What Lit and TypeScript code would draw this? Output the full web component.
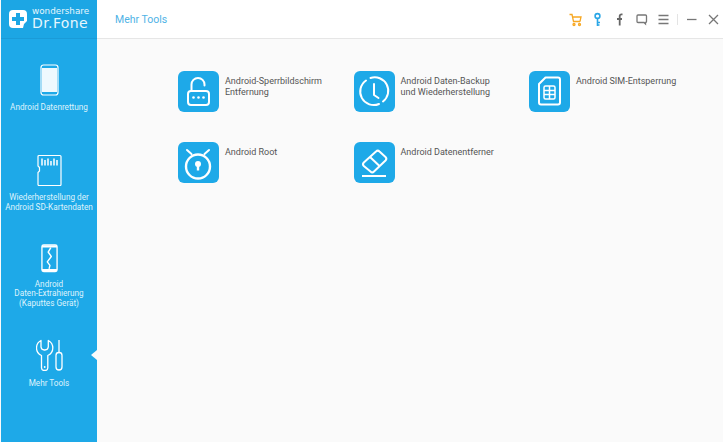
import { LitElement, html, css, svg } from "lit";
import { customElement } from "lit/decorators.js";

const tiles = [
  { label: ["Android-Sperrbildschirm", "Entfernung"], icon: svg`<g fill="none" stroke="#fff" stroke-width="2" stroke-linecap="round"><path d="M13.500 20v-6.500a6.500 6.500 0 0 1 13 0v1"/><rect x="10" y="20" width="21" height="14" rx="3"/></g><g fill="#fff"><circle cx="15.500" cy="26.500" r="1.300"/><circle cx="20.500" cy="26.500" r="1.300"/><circle cx="25.500" cy="26.500" r="1.300"/></g>` },
  { label: ["Android Daten-Backup", "und Wiederherstellung"], icon: svg`<g fill="none" stroke="#fff" stroke-width="2" stroke-linecap="round" stroke-linejoin="round"><path d="M16.500 7A13.500 13.500 0 0 1 29 30.500"/><path d="M25 33A13.500 13.500 0 0 1 12 9.500"/><path d="M20 13v11l4.500 3"/></g>` },
  { label: ["Android SIM-Entsperrung"], icon: svg`<g fill="none" stroke="#fff" stroke-width="2" stroke-linejoin="round"><path d="M16.500 6.500H29a2 2 0 0 1 2 2v23a2 2 0 0 1-2 2H12a2 2 0 0 1-2-2V13z"/><rect x="15" y="15" width="11" height="13" rx="1.500" stroke-width="1.500"/><path d="M20.500 15v13M15 19.500h11M15 23.500h11" stroke-width="1.500"/></g>` },
  { label: ["Android Root"], icon: svg`<g fill="none" stroke="#fff" stroke-linecap="round"><circle cx="20" cy="24.500" r="12" stroke-width="2.400"/><path d="M9 8l4.500 4M31 8l-4.500 4" stroke-width="2"/></g><circle cx="20" cy="22" r="3" fill="#fff"/><rect x="18.800" y="23" width="2.400" height="5.500" fill="#fff"/>` },
  { label: ["Android Datenentferner"], icon: svg`<g fill="none" stroke="#fff" stroke-width="2" stroke-linejoin="round"><path d="M9.800 20.500L22 9.500a2.500 2.500 0 0 1 3.500 0l6 5.500a2.500 2.500 0 0 1 0 3.500L20 29.500a2.500 2.500 0 0 1-3.500 0l-6.700-5.500a2.500 2.500 0 0 1 0-3.500z"/><path d="M16 15l9.500 9"/></g><rect x="8" y="33" width="24" height="2" fill="#fff"/>` },
];

const nav = [
  {
    label: ["Android Datenrettung"],
    icon: svg`<rect x="1" y="1" width="17" height="30" rx="2.500" fill="none" stroke="#fff" stroke-width="1.200"/><rect x="2" y="4" width="15" height="24" fill="#fff" fill-opacity=".93"/>`,
    w: 19,
  },
  {
    label: ["Wiederherstellung der", "Android SD-Kartendaten"],
    icon: svg`<path d="M3 1.500h21a1 1 0 0 1 1 1v28a1 1 0 0 1-1 1H3a1 1 0 0 1-1-1V18.500l1.500-1.500v-3.500L2 12V2.500a1 1 0 0 1 1-1z" fill="none" stroke="#fff" stroke-width="1.200"/><path d="M6 4.500v7M9 6v5.500M12 4.500v7M15 7v4.500M18 4.500v7M21 6v5.500" stroke="#fff" stroke-width="1.500" fill="none"/>`,
    w: 27,
  },
  {
    label: ["Android", "Daten-Extrahierung", "(Kaputtes Gerät)"],
    icon: svg`<rect x="1" y="1" width="17" height="30" rx="2" fill="none" stroke="#fff" stroke-width="1.500"/><path d="M1 1.500h17V4H1zM1 28h17v2.500H1z" fill="#fff"/><path d="M11 4L8 9l3.500 5-4.500 6 3 4-1 4" fill="none" stroke="#fff" stroke-width="1.600" stroke-linejoin="round"/>`,
    w: 19,
  },
  {
    label: ["Mehr Tools"],
    icon: svg`<g fill="none" stroke="#fff" stroke-width="1.300" stroke-linejoin="round"><path d="M5 1.500C1.800 3.200 .5 6 .5 9c0 3.500 2.200 6.200 5 7.500V29a2.800 2.800 0 0 0 2.800 2.500h.7A2.800 2.800 0 0 0 11.800 29V16.500c2.800-1.300 5-4 5-7.500 0-3-1.300-5.800-4.500-7.500v6.500A3.500 3.500 0 0 1 8.700 11 3.500 3.500 0 0 1 5 8z"/><path d="M23 1v12.500"/><path d="M23 13.500c-2 0-3 1.200-3 2.800V28a3 3 0 0 0 6 0V16.300c0-1.600-1-2.800-3-2.800z"/></g><circle cx="8.700" cy="28" r=".9" fill="#fff"/>`,
    w: 27,
  },
];

@customElement("app-root")
export class AppRoot extends LitElement {
  static styles = css`
    :host {
      display: block;
      width: 723px;
      height: 442px;
      overflow: hidden;
      font-family: Roboto, "Open Sans", sans-serif;
      background: #fafafa;
    }
    .app {
      display: flex;
      height: 442px;
    }
    .side {
      width: 96px;
      margin-left: 1px;
      flex: none;
      background: #1ea9e8;
      color: #dff3fc;
      display: flex;
      flex-direction: column;
      position: relative;
    }
    .logo {
      height: 38px;
      display: flex;
      align-items: center;
      padding-left: 8px;
      gap: 5px;
      box-sizing: border-box;
      background: #1ca6e4;
      box-shadow: 0 1px 0 #1a9bd8;
    }
    .logo .words {
      display: flex;
      flex-direction: column;
      color: #e6f6fd;
      font-family: "DejaVu Sans", sans-serif;
      padding-bottom: 3px;
    }
    .ws {
      font-size: 8.800px;
      line-height: 10px;
    }
    .df {
      font-size: 14px;
      line-height: 14px;
      letter-spacing: 0.400px;
    }
    .nav {
      height: 90px;
      padding-top: 26px;
      box-sizing: border-box;
      display: flex;
      flex-direction: column;
      align-items: center;
      text-align: center;
      font-size: 8.200px;
      line-height: 9.500px;
      gap: 7px;
    }
    .nav:last-child {
      margin-top: 5px;
      gap: 8px;
    }
    .nav svg {
      display: block;
      height: 32px;
    }
    .caret {
      position: absolute;
      right: 0;
      top: 350px;
      width: 0;
      height: 0;
      border: 5px solid transparent;
      border-right: 6px solid #fafafa;
      border-left: 0;
    }
    .main {
      flex: 1;
      display: flex;
      flex-direction: column;
      min-width: 0;
    }
    .top {
      height: 39px;
      box-sizing: border-box;
      background: #fff;
      border-bottom: 1px solid #e6e6e6;
      display: flex;
      align-items: center;
      padding-left: 18px;
      padding-right: 2px;
    }
    .title {
      color: #4fb3e6;
      font-size: 10.500px;
      flex: 1;
    }
    .tools {
      display: flex;
      align-items: center;
    }
    .tools svg {
      display: block;
      width: 15px;
      height: 15px;
    }
    .t {
      margin-left: 7px;
    }
    .sep {
      width: 1px;
      height: 11px;
      background: #e4e4e4;
      margin: 0 6px 0 6px;
    }
    .grid {
      display: grid;
      grid-template-columns: repeat(3, 175.500px);
      grid-auto-rows: 71px;
      padding: 32px 0 0 81px;
    }
    .tile {
      display: flex;
      gap: 6px;
      color: #555;
      font-size: 9px;
      line-height: 11px;
    }
    .ic {
      width: 41px;
      height: 41px;
      border-radius: 6px;
      background: #1ea9e8;
      flex: none;
    }
    .ic svg {
      display: block;
      width: 41px;
      height: 41px;
    }
    .lbl {
      padding-top: 5px;
      white-space: nowrap;
    }
  `;

  render() {
    return html`<div class="app">
      <aside class="side">
        <div class="caret"></div>
        <div class="logo">
          <svg width="18" height="18" viewBox="0 0 18 18">
            <path d="M4 0h10a4 4 0 0 1 4 4v7l-3 3-1 4H4a4 4 0 0 1-4-4V4a4 4 0 0 1 4-4z" fill="#fff" />
            <path d="M7 3h4v4h4v4h-4v4H7v-4H3V7h4z" fill="#1ca6e4" />
          </svg>
          <div class="words"><span class="ws">wondershare</span><span class="df">Dr.Fone</span></div>
        </div>
        ${nav.map(
          (n) => html`<div class="nav">
            <svg viewBox="0 0 ${n.w} 32" width="${n.w}">${n.icon}</svg>
            <div>${n.label.map((l) => html`<div>${l}</div>`)}</div>
          </div>`
        )}
      </aside>
      <div class="main">
        <header class="top">
          <div class="title">Mehr Tools</div>
          <div class="tools">
            <svg viewBox="0 0 15 15" fill="none" stroke="#f7a823" stroke-width="1.300"><path d="M1.500 2.500h2.500l1.500 7h6.500M4.500 5h8.500l-1 4.500"/><circle cx="6" cy="12.500" r="1"/><circle cx="11.500" cy="12.500" r="1"/></svg>
            <svg class="t" viewBox="0 0 15 15" fill="none" stroke="#2aa6e6" stroke-width="1.600"><circle cx="7.500" cy="4" r="2.400"/><path d="M7.500 6.500v7.500M7.500 10.500h2.500M7.500 13h2"/></svg>
            <svg class="t" viewBox="0 0 15 15" fill="none" stroke="#666" stroke-width="1.800"><path d="M10.500 2.300H9.500a1.800 1.800 0 0 0-1.800 1.800V13.500M5 7h5"/></svg>
            <svg class="t" viewBox="0 0 15 15" fill="none" stroke="#777" stroke-width="1.300"><path d="M4 3h7.500a1 1 0 0 1 1 1v5.500a1 1 0 0 1-1 1v1.500l-1.500-1.500H4a1 1 0 0 1-1-1V4a1 1 0 0 1 1-1z"/></svg>
            <svg class="t" viewBox="0 0 15 15" fill="none" stroke="#777" stroke-width="1.300"><path d="M2.500 3.500h10M2.500 7.500h10M2.500 11.500h10"/></svg>
            <div class="sep"></div>
            <svg viewBox="0 0 15 15" fill="none" stroke="#777" stroke-width="1.300"><path d="M3 7.500h9.500"/></svg>
            <svg class="t" viewBox="0 0 15 15" fill="none" stroke="#777" stroke-width="1.300"><path d="M3 3l9 9M12 3l-9 9"/></svg>
          </div>
        </header>
        <div class="grid">
          ${tiles.map(
            (t) => html`<div class="tile">
              <div class="ic"><svg viewBox="0 0 41 41">${t.icon}</svg></div>
              <div class="lbl">${t.label.map((l) => html`<div>${l}</div>`)}</div>
            </div>`
          )}
        </div>
      </div>
    </div>`;
  }
}
